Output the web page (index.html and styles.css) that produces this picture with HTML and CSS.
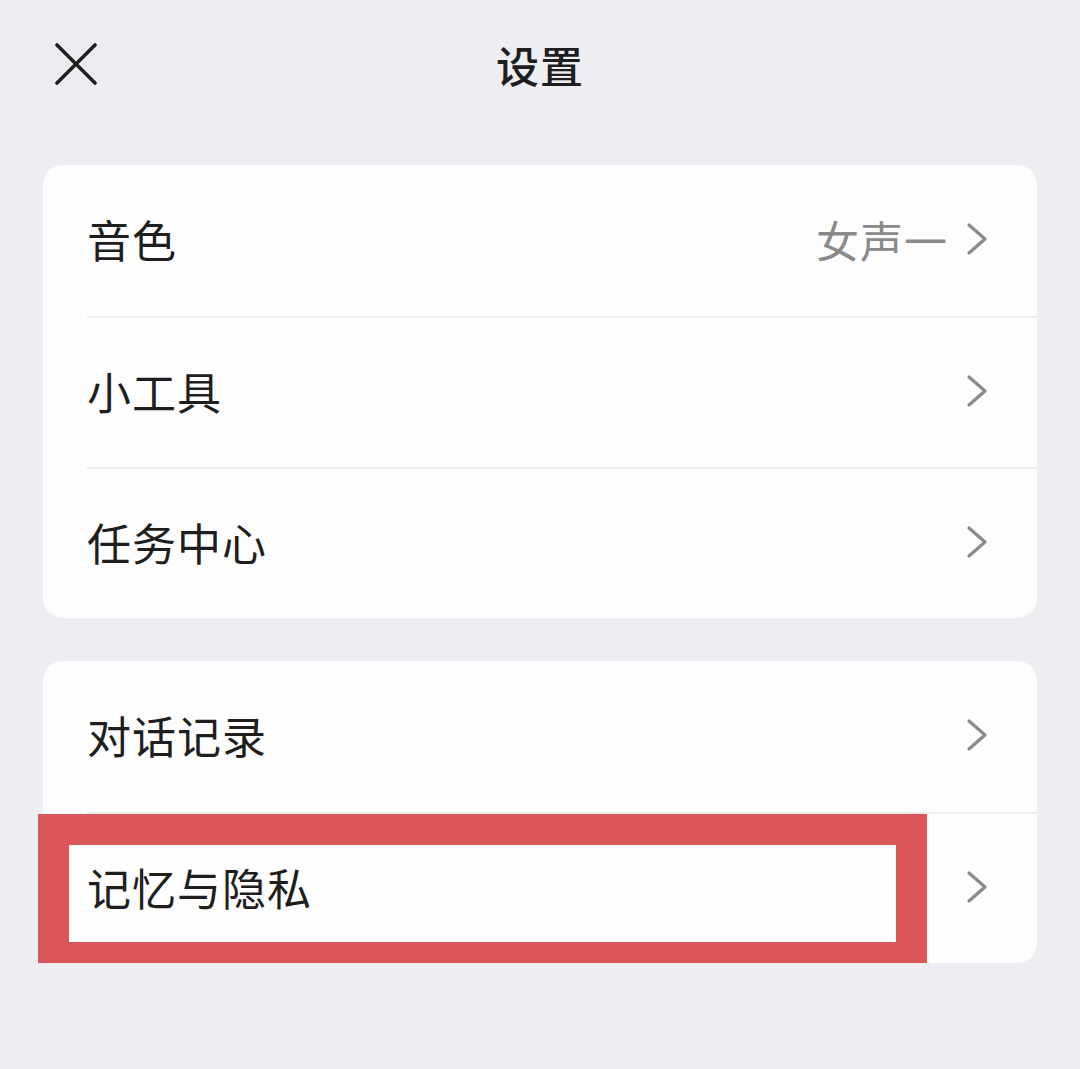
FILE: index.html
```html
<!DOCTYPE html>
<html lang="zh-CN">
<head>
    <meta charset="UTF-8">
    <meta name="viewport" content="width=device-width, initial-scale=1.0">
    <title>设置</title>
    <link rel="stylesheet" href="styles.css">
</head>
<body>
    <div class="header">
        <button class="close" aria-label="关闭">
            <svg width="42" height="42" viewBox="0 0 42 42">
                <path d="M2 2 L40 40 M40 2 L2 40" stroke="#1e1e1e" stroke-width="3.6" stroke-linecap="round" fill="none"/>
            </svg>
        </button>
        <h1>设置</h1>
    </div>

    <div class="card">
        <div class="row">
            <span class="label">音色</span>
            <span class="value">女声一</span>
            <svg class="chevron" width="22" height="34" viewBox="0 0 22 34"><path d="M3 3 L19 17 L3 31" /></svg>
        </div>
        <div class="row">
            <span class="label">小工具</span>
            <svg class="chevron" width="22" height="34" viewBox="0 0 22 34"><path d="M3 3 L19 17 L3 31" /></svg>
        </div>
        <div class="row">
            <span class="label">任务中心</span>
            <svg class="chevron" width="22" height="34" viewBox="0 0 22 34"><path d="M3 3 L19 17 L3 31" /></svg>
        </div>
    </div>

    <div class="card">
        <div class="row">
            <span class="label">对话记录</span>
            <svg class="chevron" width="22" height="34" viewBox="0 0 22 34"><path d="M3 3 L19 17 L3 31" /></svg>
        </div>
        <div class="row">
            <span class="label">记忆与隐私</span>
            <svg class="chevron" width="22" height="34" viewBox="0 0 22 34"><path d="M3 3 L19 17 L3 31" /></svg>
            <div class="highlight"></div>
        </div>
    </div>
</body>
</html>
```

FILE: styles.css
```css
body {
    margin: 0;
    padding: 0 43px;
    background-color: #eeedf2;
    font-family: "Noto Sans CJK SC", "Noto Sans", sans-serif;
    color: #1e1e1e;
}
.header {
    position: relative;
    height: 134px;
    box-sizing: border-box;
    padding-bottom: 6px;
    display: flex;
    align-items: center;
    justify-content: center;
}
.header h1 {
    margin: 0;
    font-size: 43px;
    font-weight: 500;
    letter-spacing: 1px;
}
.close {
    position: absolute;
    left: 12px;
    top: 43px;
    padding: 0;
    border: none;
    background: none;
    width: 42px;
    height: 42px;
}
.card {
    background-color: #fdfdfd;
    border-radius: 20px;
    margin-top: 31px;
}
.card + .card {
    margin-top: 43px;
}
.row {
    position: relative;
    display: flex;
    align-items: center;
    height: 151px;
    box-sizing: border-box;
    margin-left: 44px;
    padding-right: 49px;
    padding-bottom: 3px;
}
.row + .row {
    border-top: 2px solid #ececec;
}
.label {
    flex: 1;
    font-size: 44px;
    letter-spacing: 1px;
}
.value {
    font-size: 43px;
    color: #8a8a8a;
    margin-right: 18px;
    letter-spacing: 1px;
}
.chevron path {
    fill: none;
    stroke: #8a8a8a;
    stroke-width: 3.2;
    stroke-linecap: round;
    stroke-linejoin: round;
}
.highlight {
    position: absolute;
    left: -49px;
    top: 0;
    width: 889px;
    height: 159px;
    box-sizing: border-box;
    border: 31px solid #da5659;
}
```
